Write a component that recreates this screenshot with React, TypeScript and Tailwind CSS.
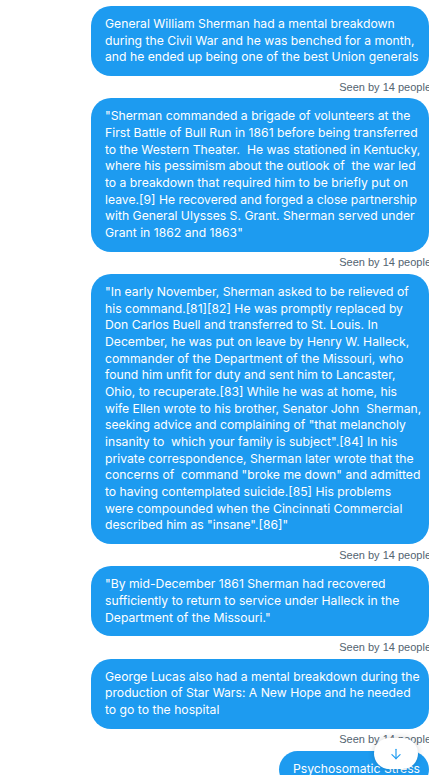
import React from "react";

const messages: string[][] = [
  [
    "General William Sherman had a mental breakdown",
    "during the Civil War and he was benched for a month,",
    "and he ended up being one of the best Union generals",
  ],
  [
    "\"Sherman commanded a brigade of volunteers at the",
    "First Battle of Bull Run in 1861 before being transferred",
    "to the Western Theater.  He was stationed in Kentucky,",
    "where his pessimism about the outlook of  the war led",
    "to a breakdown that required him to be briefly put on",
    "leave.[9] He recovered and forged a close partnership",
    "with General Ulysses S. Grant. Sherman served under",
    "Grant in 1862 and 1863\"",
  ],
  [
    "\"In early November, Sherman asked to be relieved of",
    "his command.[81][82] He was promptly replaced by",
    "Don Carlos Buell and transferred to St. Louis. In",
    "December, he was put on leave by Henry W. Halleck,",
    "commander of the Department of the Missouri, who",
    "found him unfit for duty and sent him to Lancaster,",
    "Ohio, to recuperate.[83] While he was at home, his",
    "wife Ellen wrote to his brother, Senator John  Sherman,",
    "seeking advice and complaining of \"that melancholy",
    "insanity to  which your family is subject\".[84] In his",
    "private correspondence, Sherman later wrote that the",
    "concerns of  command \"broke me down\" and admitted",
    "to having contemplated suicide.[85] His problems",
    "were compounded when the Cincinnati Commercial",
    "described him as \"insane\".[86]\"",
  ],
  [
    "\"By mid-December 1861 Sherman had recovered",
    "sufficiently to return to service under Halleck in the",
    "Department of the Missouri.\"",
  ],
  [
    "George Lucas also had a mental breakdown during the",
    "production of Star Wars: A New Hope and he needed",
    "to go to the hospital",
  ],
];

function Bubble({ lines, width }: { lines: string[]; width: string }) {
  return (
    <div
      className={
        "rounded-[20px] bg-[#1d9bf0] text-white px-[14px] py-[10px] text-[12.2px] leading-[16.67px] " +
        width
      }
      style={{ fontFamily: "Inter, 'Noto Sans', sans-serif" }}
    >
      {lines.map((l, i) => (
        <div key={i} className="whitespace-pre">
          {l}
        </div>
      ))}
    </div>
  );
}

function Seen() {
  return (
    <div
      className="mt-[4.5px] mb-[4.5px] mr-[-2px] text-[11px] leading-[13.3px] text-[#536471] whitespace-nowrap"
      style={{ fontFamily: "'Liberation Sans', Arial, sans-serif" }}
    >
      Seen by 14 people
    </div>
  );
}

export default function App() {
  return (
    <div className="relative w-[429px] h-[775px] overflow-hidden bg-white">
      <div className="flex flex-col items-end pt-[6px]">
        {messages.map((m, i) => (
          <React.Fragment key={i}>
            <Bubble lines={m} width="w-[338px]" />
            <Seen />
          </React.Fragment>
        ))}
        <Bubble lines={["Psychosomatic Stress"]} width="w-[150px]" />
      </div>
      <div className="absolute left-[374px] top-[738px] w-[44px] h-[31px] rounded-full bg-white shadow-[0_0_6px_rgba(0,0,0,0.18)] flex items-center justify-center">
        <svg width="14" height="14" viewBox="0 0 24 24" fill="none" stroke="#1d9bf0" strokeWidth="2" strokeLinecap="round" strokeLinejoin="round">
          <path d="M12 4v16" />
          <path d="M5 13l7 7 7-7" />
        </svg>
      </div>
    </div>
  );
}
